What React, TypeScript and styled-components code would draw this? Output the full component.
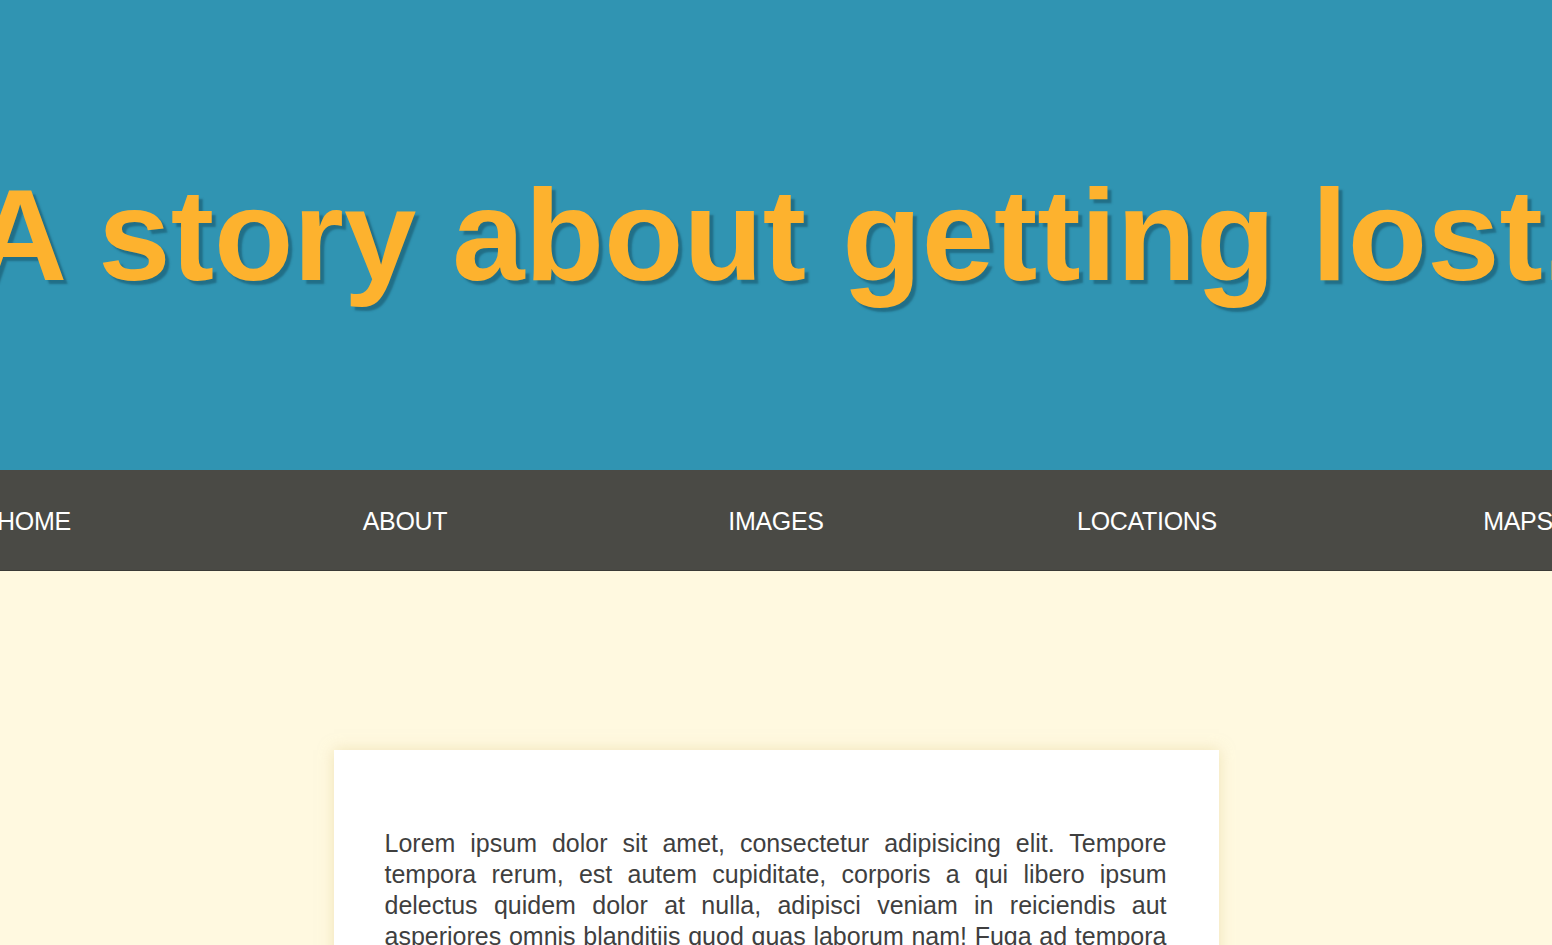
import React from "react";
import styled, { createGlobalStyle } from "styled-components";

const GlobalStyle = createGlobalStyle`
  html, body {
    margin: 0;
    padding: 0;
    overflow-x: hidden;
    background: #fff9e0;
  }
  body {
    font-family: "Liberation Sans", Arial, Helvetica, sans-serif;
  }
  * { box-sizing: border-box; }
`;

const Page = styled.div`
  display: flex;
  flex-direction: column;
  min-height: 100vh;
  background: #fff9e0;
  overflow: hidden;
`;

const Hero = styled.header`
  height: 470px;
  background: #3094b2;
  display: flex;
  align-items: center;
  justify-content: center;
  overflow: hidden;
`;

const Title = styled.h1`
  margin: 0;
  flex: none;
  white-space: nowrap;
  font-family: "Liberation Sans", Arial, Helvetica, sans-serif;
  font-weight: 700;
  font-size: 130px;
  line-height: 1;
  color: #fdb22e;
  text-shadow: 4px 4px 2px rgba(22, 80, 100, 0.55);
`;

const Nav = styled.nav`
  height: 101px;
  background: #4a4a45;
  border-bottom: 1px solid #3a3a36;
  display: flex;
  align-items: center;
  justify-content: center;
  overflow: hidden;
  padding-top: 3px;
`;

const NavItem = styled.a`
  flex: none;
  width: 371px;
  text-align: center;
  color: #ffffff;
  font-size: 25px;
  line-height: 1;
  text-decoration: none;
  letter-spacing: -0.3px;
`;

const Main = styled.main`
  display: flex;
  justify-content: center;
  padding-top: 179px;
`;

const Card = styled.article`
  width: 885px;
  background: #ffffff;
  padding: 78px 52px 60px 51px;
  box-shadow: 0 0 14px rgba(225, 210, 150, 0.55);
`;

const Paragraph = styled.p`
  margin: 0;
  font-size: 25px;
  line-height: 31px;
  color: #3f3f3f;
  text-align: justify;
`;

const links = ["HOME", "ABOUT", "IMAGES", "LOCATIONS", "MAPS"];

export default function App() {
  return (
    <Page>
      <GlobalStyle />
      <Hero>
        <Title>A story about getting lost.</Title>
      </Hero>
      <Nav>
        {links.map((l) => (
          <NavItem key={l} href="#">
            {l}
          </NavItem>
        ))}
      </Nav>
      <Main>
        <Card>
          <Paragraph>
            Lorem ipsum dolor sit amet, consectetur adipisicing elit. Tempore
            tempora rerum, est autem cupiditate, corporis a qui libero ipsum
            delectus quidem dolor at nulla, adipisci veniam in reiciendis aut
            asperiores omnis blanditiis quod quas laborum nam! Fuga ad tempora
            in aspernatur pariatur fugit quibusdam dolores sunt esse magni, ut
            quae quod quos corporis a culpa voluptas, possimus fugiat rerum
            minima eligendi repellendus.
          </Paragraph>
        </Card>
      </Main>
    </Page>
  );
}
